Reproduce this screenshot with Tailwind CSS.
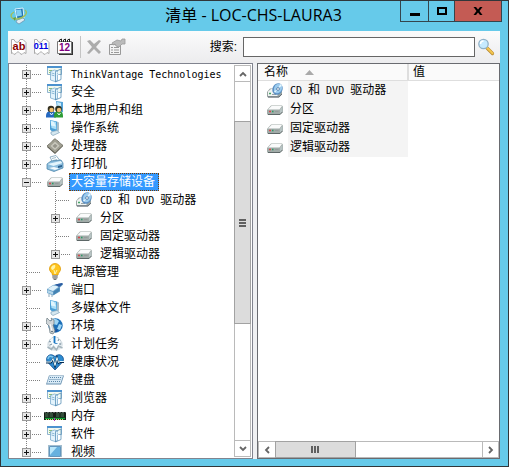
<!DOCTYPE html>
<html lang="zh-CN">
<head>
<meta charset="utf-8">
<meta name="viewport" content="width=device-width, initial-scale=1">
<title>清单 - LOC-CHS-LAURA3</title>
<script src="https://cdn.jsdelivr.net/npm/@tailwindcss/browser@4"></script>
</head>
<body class="h-screen overflow-hidden font-['DejaVu_Sans_Mono','Noto_Sans_CJK_SC',monospace] text-xs text-black">
<svg class="hidden" aria-hidden="true">
  <defs>
    <linearGradient id="gb" x1="0" y1="0" x2="1" y2="1"><stop offset="0" stop-color="#b9e6fb"/><stop offset="1" stop-color="#3b94d2"/></linearGradient>
    <linearGradient id="gd" x1="0" y1="0" x2="0" y2="1"><stop offset="0" stop-color="#fff"/><stop offset="1" stop-color="#ced4d2"/></linearGradient>
  </defs>
  <symbol id="line" viewBox="0 0 29 18"><path d="M13.500 0V18" stroke="#808080" stroke-dasharray="1 1"/></symbol>
  <symbol id="leaf" viewBox="0 0 29 18"><path d="M13.500 0V18M14 9.500H28" stroke="#808080" stroke-dasharray="1 1"/></symbol>
  <symbol id="plus" viewBox="0 0 29 18"><path d="M13.500 0V18M19 9.500H28" stroke="#808080" stroke-dasharray="1 1"/><rect x="9.500" y="5.500" width="8" height="8" fill="#e6e6e6" stroke="#999"/><path d="M11 9.500H16M13.500 7V12" stroke="#111"/></symbol>
  <symbol id="plusend" viewBox="0 0 29 18"><path d="M13.500 0V5M19 9.500H28" stroke="#808080" stroke-dasharray="1 1"/><rect x="9.500" y="5.500" width="8" height="8" fill="#e6e6e6" stroke="#999"/><path d="M11 9.500H16M13.500 7V12" stroke="#111"/></symbol>
  <symbol id="minus" viewBox="0 0 29 18"><path d="M13.500 0V18M19 9.500H28" stroke="#808080" stroke-dasharray="1 1"/><rect x="9.500" y="5.500" width="8" height="8" fill="#e6e6e6" stroke="#999"/><path d="M11 9.500H16" stroke="#111"/></symbol>

  <symbol id="server" viewBox="0 0 18 18">
    <path d="M1.500 1.500h14v8h-14z" fill="#f3f9ef" stroke="#8fb4cf"/><path d="M1 1h15v2H1z" fill="#4c92cf"/><path d="M3 5.500h3M3 7.500h2" stroke="#8bbe77"/>
    <path d="M4.500 6.500l4-1.500 3 1v9.500l-2.500 1-4.500-1.500z" fill="#e3f3fc" stroke="#6fa3c8" stroke-width=".7"/>
    <path d="M9.500 6.500L15 4v10.500l-5.500 2.500z" fill="url(#gb)" stroke="#4481ae" stroke-width=".7"/>
    <path d="M5.500 8l3 .8M5.500 10l3 .8" stroke="#74a9cb" stroke-width=".8"/><path d="M11 7.500l3-1.200M11 9.500l3-1.200" stroke="#e8f7ff" stroke-width=".8"/>
  </symbol>
  <symbol id="pc" viewBox="0 0 18 18">
    <path d="M4 1l7 1.500 1 9-6 1-2-2z" fill="#4a9fd6"/><path d="M4.500 1.500L10 3l.5 7.500-5-1.500z" fill="#a9def8"/><path d="M5 2l3 1 2 4.500-5-1z" fill="#e0f5fd"/><path d="M11 2.500l2 1v8l-2 1z" fill="#a5bdcb"/><path d="M5 13l6-1.500 2.500 2-6.500 3-2-1.500z" fill="#d6e8f0" stroke="#7fa2ba" stroke-width=".7"/>
  </symbol>
  <symbol id="users" viewBox="0 0 18 18">
    <path d="M10 0l7 1v10l-5 3z" fill="#57a5d9"/><path d="M11 1l4 1v7l-3 1z" fill="#c5eafb"/><path d="M0 15q0-5 5-5t5 5v1.500H0z" fill="#2468c0"/><path d="M8 15q0-5 4.500-5T17 15v1.500H8z" fill="#2e9c35"/><circle cx="5" cy="8" r="3.300" fill="#332f20"/><circle cx="5.500" cy="9" r="2.200" fill="#f2c16f"/><circle cx="12.500" cy="8" r="3.300" fill="#273021"/><circle cx="13" cy="9" r="2.200" fill="#efbd77"/><path d="M4 12l1.500 2L7 12M11.500 12l1.500 2 1.500-2" stroke="#e9f7ff" fill="none"/>
  </symbol>
  <symbol id="cpu" viewBox="0 0 18 18">
    <path d="M1 10L9 2l8 7-8 8z" fill="#56554b"/><path d="M1 9L9 1.500 17 8.500 9 16z" fill="#a09f92" stroke="#615f52" stroke-dasharray="1 .7"/><path d="M4.500 9L9 4.800l4.500 3.900L9 13z" fill="#c9c8bd"/><path d="M6.500 9L9 6.700l2.500 2L9 11.200z" fill="#96958a"/>
  </symbol>
  <symbol id="printer" viewBox="0 0 18 18">
    <path d="M4 2l6-1.500 4 5L7 8z" fill="#fff" stroke="#789fb7" stroke-width=".8"/><path d="M6 3.500l4-1M7 5.500l4-1" stroke="#a3bfce"/><path d="M1 9l4-3 10-1 2 3v5l-9 3.500L1 14z" fill="#8bbddd" stroke="#407ca4" stroke-width=".7"/><path d="M1.500 9l6 2L16.500 8l-2-2L6 8z" fill="#e4f5fc"/><path d="M3 13l6 2 4-1.500-5-1.500z" fill="#f5fbfd"/><path d="M12 11l4-1v2l-4 1z" fill="#2c608e"/>
  </symbol>
  <symbol id="drive" viewBox="0 0 18 18">
    <path d="M1 9l4-4.500h11l1 1v5L14 14H2l-1-1z" fill="#a1aba8"/><path d="M2 8.500L5.500 5H16l-2.500 3.500z" fill="#fafbfb"/><path d="M1.700 8.500h12v4.500h-12z" fill="url(#gd)"/><path d="M14 8.500L16.500 5.500v5L14 13z" fill="#b7c3c3"/><path d="M3 10.500h2" stroke="#d8484b" stroke-width="1.500"/><path d="M6 10.500h1.500" stroke="#2a9b64" stroke-width="1.500"/><path d="M9 10.500h3.500" stroke="#959b9c"/><path d="M2 13.500h12l2.500-2.500" stroke="#5d6767" fill="none"/>
  </symbol>
  <symbol id="cddrive" viewBox="0 0 18 18">
    <path d="M1 10l3-3.500h11l1 1v5L13 15.500H2l-1-1z" fill="#99a3a1"/><path d="M2 9.500L5 7h7l-.5 7H2z" fill="#f1f4f3"/><path d="M3 11.500h2" stroke="#47a467" stroke-width="1.500"/><path d="M6 12.500h4" stroke="#99a5a8"/><ellipse cx="11.500" cy="7" rx="5" ry="6" transform="rotate(24 11.500 7)" fill="#5c90c4"/><ellipse cx="12" cy="6.500" rx="3.900" ry="4.900" transform="rotate(24 12 6.500)" fill="#9bcbee"/><path d="M12 6l2.500-4 1.500 2zM11 8l-2 3-1-2z" fill="#e6f7ff"/><circle cx="12" cy="7" r="1.400" fill="#fff" stroke="#386694" stroke-width=".7"/><path d="M2 15h11l3-3" stroke="#69717a" fill="none"/>
  </symbol>
  <symbol id="bulb" viewBox="0 0 18 18">
    <path d="M3.500 6a5.500 5.500 0 0111 0c0 3-2.500 3.500-2.500 6H6.500C6.500 9.500 3.500 9 3.500 6z" fill="#ffc51f" stroke="#df9800" stroke-width=".8"/><path d="M5 5a4 4 0 014-3c1 2-1 5-3 5z" fill="#fff4a8"/><path d="M8 7l1 4 2-4" fill="none" stroke="#fff5ae"/><path d="M6.500 12h5v3L10 17H8l-1.500-2z" fill="#777"/><path d="M7 13h4M7 15h4" stroke="#ddd" stroke-width=".8"/>
  </symbol>
  <symbol id="port" viewBox="0 0 18 18">
    <path d="M1 8l6-4 9-2 1 1.500-3 3v4L7 14.500 1 12z" fill="#6da3ca"/><path d="M1.500 8L7 4.500l6 1L7 10z" fill="#dff1fa"/><path d="M1.500 9L7 11v2.500L1.500 11.500z" fill="#b4d6ea"/><path d="M7.500 10.500l6-4v3.500l-6 4z" fill="#4583b3"/><path d="M9 3.500l7-1.500 1 1-4 3z" fill="#2c5aa0"/><path d="M3 13v3M6 14v2" stroke="#8ba7ba"/>
  </symbol>
  <symbol id="globe" viewBox="0 0 18 18">
    <circle cx="9.500" cy="8.500" r="7.200" fill="#1d70b8"/><path d="M6 2q4-1 7 2l-2 4-4-1zM13 7l3 1-2 5-3-1z" fill="#9fd6f5"/><path d="M4 11q4 3 8 1l-1 3-5-1z" fill="#1850a0"/><path d="M1 1l3 3 2-1-1-2 3 2v4l-1 1 2 6-2 3-3-1L3 9 0 6z" fill="#d0d5d8" stroke="#687880" stroke-width=".7"/><path d="M4 7l2 7" stroke="#fff"/><circle cx="6" cy="14.500" r=".8" fill="#415866"/>
  </symbol>
  <symbol id="clock" viewBox="0 0 18 18">
    <ellipse cx="9" cy="9.500" rx="8" ry="6.500" fill="#e1e8ec"/><circle cx="9" cy="8" r="6" fill="#f4f9fc" stroke="#b4c1c8" stroke-dasharray="2 1"/><path d="M8.500 1v7" stroke="#1575c4" stroke-width="1.800"/><path d="M8.500 8.500h3" stroke="#4c90c8"/><path d="M1.500 12l4 2.500 2-3 3 3.500 2-4 4 2" stroke="#a4b4bc" stroke-width="1.500" fill="none"/><path d="M3 6l2 1M4 10l2-1M13 4l-1 2M13 9h2" stroke="#71899a"/>
  </symbol>
  <symbol id="heart" viewBox="0 0 18 18">
    <path d="M9 17L1 8.500C-1 4 4-1 9 3.500 14-1 19 4 17 8.500z" fill="#2d8bd0" stroke="#0f4c8e" stroke-width=".8"/><path d="M2 6c0-3 3-4 6-1" stroke="#81c9ef" fill="none" stroke-width="1.500"/><path d="M0 9.500h5L7 6l2 7 2-8 1.500 5 1.500-1h4" stroke="#062a50" stroke-width="1.800" fill="none"/><path d="M0 9h5l2-3.500 2 7 2-8 1.500 5L14 8.500h4" stroke="#e5faff" fill="none"/>
  </symbol>
  <symbol id="keyboard" viewBox="0 0 18 18">
    <path d="M3 4.500h15l-3 9H0z" fill="#658eae"/><path d="M3.500 5H17l-2.500 7.500H1z" fill="#d8eaf6"/><path d="M4 6.500h12M3.500 8.500h12M3 10.500h11.500" stroke="#5c86a8" stroke-dasharray="1 1"/>
  </symbol>
  <symbol id="memory" viewBox="0 0 22 18">
    <path d="M0 5h22v8H0z" fill="#151d17"/><path d="M1 6h3.500v4H1zM5.500 6H9v4H5.500zM12 6h3.500v4H12zM16.500 6H20v4h-3.500z" fill="#324c39"/><path d="M0 5.500h22" stroke="#53605a" stroke-dasharray="2 1"/><path d="M1 11.500h20" stroke="#13a339" stroke-width="1.500"/><path d="M2 12.500h18" stroke="#d7d76b" stroke-dasharray="1 1"/><path d="M10 11h1v3h-1z" fill="#ba36b4"/>
  </symbol>
  <symbol id="monitor" viewBox="0 0 18 18">
    <path d="M2 2h14v14H2z" fill="#a2bdce"/><path d="M3.500 3.500h11v10h-11z" fill="#236fae"/><path d="M4 4h10v9H4z" fill="#66b1df"/><path d="M4 4h7l-7 8z" fill="#b9e7fb"/><path d="M4 15h10" stroke="#e4f0f7"/>
  </symbol>
</svg>

<div class="flex h-full flex-col border border-[#30363a] bg-[#66caea] px-[7px] pb-[7px]">
  <header class="relative flex h-[30px] shrink-0 items-center pl-[2px]">
    <svg class="h-[18px] w-[18px]" viewBox="0 0 18 18" aria-hidden="true"><path d="M5 2l8-1 1 10-7 1z" fill="#2476b3" stroke="#d9f3ff"/><path d="M6 3l5-.5 1 6-5 1z" fill="#80cff3"/><path d="M7 13l6-2 2 2-6 4-3-2z" fill="#dcecf3" stroke="#648daa" stroke-width=".7"/><path d="M4 5C-1 8 1 13 7 12c7-1 12-6 8-9" fill="none" stroke="#a2bf58" stroke-width="1.300"/><path d="M3 11l3-1-1 4" fill="#6d9c38"/></svg>
    <h1 class="absolute inset-x-0 top-[2px] pr-[2px] text-center font-['Open_Sans','Noto_Sans_CJK_SC',sans-serif] text-base leading-6">清单 - LOC-CHS-LAURA3</h1>
    <div class="absolute top-0 right-[-1px] flex h-[21px] divide-x divide-[#34454d] border-x border-b border-[#34454d]">
      <button type="button" aria-label="最小化" class="grid w-7 place-items-center"><svg class="h-3 w-3" viewBox="0 0 12 12"><path d="M1 8h10v3H1z"/></svg></button>
      <button type="button" aria-label="最大化" class="grid w-[26px] place-items-center"><svg class="h-3 w-3" viewBox="0 0 12 12"><path d="M1 2h10v8H1zM3 4v4h6V4z" fill-rule="evenodd"/></svg></button>
      <button type="button" aria-label="关闭" class="grid w-[46px] place-items-center bg-[#c45b54]"><svg class="h-3 w-3" viewBox="0 0 12 12"><path d="M1.500 2H4l2 2.500L8 2h2.500L7.500 6l3 4H8L6 7.500 4 10H1.500l3-4z"/></svg></button>
    </div>
  </header>

  <main class="mr-px flex min-h-0 flex-1 flex-col bg-[#eff0f2]">
    <div class="flex h-8 shrink-0 items-center bg-linear-to-b from-[#fbfbfb] to-[#ececee] pr-[5px] pl-[2px]" role="toolbar">
      <button type="button" aria-label="文本" class="mr-[5px]"><svg class="h-[18px] w-[18px]" viewBox="0 0 18 18"><path d="M1.500 15.500V1.500H4l1 2 2 1 2-1 1-2h3l3 3v11l-2-1-2 2-2-1-2-2-2 2-2 1-2-2z" fill="#fff" stroke="#aaa"/><text x="9" y="12" text-anchor="middle" font-size="11" font-weight="bold" font-family="Liberation Sans" fill="#8b0000">ab</text></svg></button>
      <button type="button" aria-label="数字" class="mr-[5px]"><svg class="h-[18px] w-[18px]" viewBox="0 0 18 18"><path d="M1.500 15.500V1.500H4l1 2 2 1 2-1 1-2h3l3 3v11l-2-1-2 2-2-1-2-2-2 2-2 1-2-2z" fill="#fff" stroke="#aaa"/><text x="8" y="11" text-anchor="middle" font-size="9" font-weight="bold" font-family="Liberation Sans" fill="#0000e0">011</text></svg></button>
      <button type="button" aria-label="日期" class="mr-[6px]"><svg class="h-[18px] w-[18px]" viewBox="0 0 18 18"><path d="M3 4h14v13H3z" fill="#333"/><path d="M1.500 3.500h14v12h-14z" fill="#fff" stroke="#777"/><path d="M3.500 4V2l2-1v3M7.500 4V2l2-1v3M11.500 4V2l2-1v3" fill="none" stroke="#222"/><text x="8.500" y="13" text-anchor="middle" font-size="10" font-weight="bold" font-family="Liberation Sans" fill="#800080">12</text></svg></button>
      <span class="mr-[5px] h-[22px] w-px bg-[#c4c4c4]"></span>
      <button type="button" aria-label="删除" class="mr-1" disabled><svg class="h-[18px] w-[18px]" viewBox="0 0 18 18"><path d="M1 3l3-1 4 4 5-4 2 1-5 6 5 5-2 2-5-5-5 5-2-1 5-6z" fill="#acacac"/></svg></button>
      <button type="button" aria-label="属性" disabled><svg class="h-[18px] w-[18px]" viewBox="0 0 18 18"><path d="M1.500 6.500h11v10h-11z" fill="#f3f3f3" stroke="#999"/><path d="M3 9.500h2M6 9.500h5M3 12h2M6 12h5M3 14.500h2M6 14.500h5" stroke="#999"/><path d="M4 5l5-3 4 1 1-2h3v5h-3l-3 3-3-1-1-2-2 1z" fill="#bbb" stroke="#999" stroke-width=".8"/></svg></button>
      <label for="q" class="mr-[6px] ml-auto shrink-0 pl-2 font-['Liberation_Sans','Noto_Sans_CJK_SC',sans-serif]">搜索:</label>
      <input id="q" type="text" class="h-5 w-[232px] border border-[#666] bg-white px-1 outline-none">
      <button type="button" aria-label="查找" class="ml-[2px]"><svg class="h-[18px] w-[18px]" viewBox="0 0 18 18"><path d="M10 10l5.500 5.500" stroke="#b98a30" stroke-width="3.200" stroke-linecap="round"/><path d="M10 9.700l5.500 5.500" stroke="#f3c64f" stroke-width="2" stroke-linecap="round"/><circle cx="6.500" cy="6" r="4.700" fill="#c6eaff" stroke="#8fb0c6" stroke-width="1.300"/><path d="M3.500 6a3 3 0 013-3" fill="none" stroke="#fff" stroke-width="1.500"/></svg></button>
    </div>

    <div class="flex min-h-0 flex-1 gap-1">
      <section class="flex w-[245px] shrink-0 border border-[#81848f] bg-white p-px pl-0">
        <ul id="tree" role="tree" class="min-w-0 flex-1 overflow-hidden pl-1 leading-[18px] whitespace-nowrap"></ul>
        <div class="flex w-[17px] shrink-0 flex-col border border-[#bababa] bg-white">
          <button type="button" aria-label="向上" class="grid h-4 place-items-center border-b border-[#bababa]"><svg class="h-2 w-2" viewBox="0 0 8 8"><path d="M1 6l3-3 3 3" fill="none" stroke="#666" stroke-width="1.800"/></svg></button>
          <span class="grow-[39]"></span>
          <span class="-mx-px flex grow-[193] flex-col items-center justify-center gap-px border border-[#a2a2a2] bg-[#dcdcdc]"><i class="h-0.5 w-[7px] bg-[#606060]"></i><i class="h-0.5 w-[7px] bg-[#606060]"></i><i class="h-0.5 w-[7px] bg-[#606060]"></i></span>
          <span class="grow-[116]"></span>
          <button type="button" aria-label="向下" class="grid h-4 place-items-center border-t border-[#bababa]"><svg class="h-2 w-2" viewBox="0 0 8 8"><path d="M1 2l3 3 3-3" fill="none" stroke="#666" stroke-width="1.800"/></svg></button>
        </div>
      </section>

      <section class="flex min-w-0 flex-1 flex-col border border-[#696b70] bg-white">
        <div class="min-h-0 flex-1 overflow-hidden">
          <table class="w-full table-fixed border-collapse text-left">
            <thead class="bg-[#fafafa]">
              <tr class="h-4 leading-4">
                <th class="w-[150px] border-r-2 border-b border-[#dedede] p-0 pl-[6px] font-normal"><span class="flex items-center gap-[17px]">名称<svg class="h-[5px] w-[9px]" viewBox="0 0 9 5"><path d="M0 5l4.500-5L9 5z" fill="#aaa"/></svg></span></th>
                <th class="border-b border-[#dedede] p-0 pl-1 font-normal">值</th>
              </tr>
            </thead>
            <tbody id="list"></tbody>
          </table>
        </div>
        <div class="flex h-[17px] shrink-0 border border-[#bababa]">
          <button type="button" aria-label="向左" class="grid w-4 place-items-center"><svg class="h-2 w-2" viewBox="0 0 8 8"><path d="M6 1L3 4l3 3" fill="none" stroke="#666" stroke-width="1.800"/></svg></button>
          <span class="-my-px flex grow-[70] items-center justify-center gap-px border border-[#a2a2a2] bg-[#dcdcdc]"><i class="h-[7px] w-0.5 bg-[#606060]"></i><i class="h-[7px] w-0.5 bg-[#606060]"></i><i class="h-[7px] w-0.5 bg-[#606060]"></i></span>
          <span class="grow-[125]"></span>
          <button type="button" aria-label="向右" class="grid w-4 place-items-center border-l border-[#bababa]"><svg class="h-2 w-2" viewBox="0 0 8 8"><path d="M2 1l3 3-3 3" fill="none" stroke="#666" stroke-width="1.800"/></svg></button>
        </div>
      </section>
    </div>
  </main>
</div>

<script>
  // [depth, branch, icon, label]
  const nodes = [
    [0, 'plus', 'server', 'ThinkVantage Technologies'],
    [0, 'plus', 'server', '安全'],
    [0, 'plus', 'users', '本地用户和组'],
    [0, 'plus', 'pc', '操作系统'],
    [0, 'plus', 'cpu', '处理器'],
    [0, 'plus', 'printer', '打印机'],
    [0, 'minus', 'drive', '大容量存储设备'],
    [1, 'leaf', 'cddrive', 'CD 和 DVD 驱动器'],
    [1, 'plus', 'drive', '分区'],
    [1, 'leaf', 'drive', '固定驱动器'],
    [1, 'plusend', 'drive', '逻辑驱动器'],
    [0, 'leaf', 'bulb', '电源管理'],
    [0, 'plus', 'port', '端口'],
    [0, 'leaf', 'pc', '多媒体文件'],
    [0, 'plus', 'globe', '环境'],
    [0, 'plus', 'clock', '计划任务'],
    [0, 'leaf', 'heart', '健康状况'],
    [0, 'leaf', 'keyboard', '键盘'],
    [0, 'plus', 'server', '浏览器'],
    [0, 'plus', 'memory', '内存'],
    [0, 'plus', 'server', '软件'],
    [0, 'plus', 'monitor', '视频'],
  ];
  // Latin runs are set smaller so that each letter takes half of a Chinese character
  const label = t => t.replace(/[A-Za-z ]+/g, m => `<span class="text-[10px] whitespace-pre">${m}</span>`);
  const branch = id => `<svg class="block h-[18px] w-[29px]"><use href="#${id}"/></svg>`;
  const icon = id => id === 'memory'
    ? `<svg class="mx-[2px] h-[18px] w-[22px] shrink-0"><use href="#memory"/></svg>`
    : `<svg class="mx-1 h-[18px] w-[18px] shrink-0"><use href="#${id}"/></svg>`;

  document.getElementById('tree').innerHTML = nodes.map(([depth, kind, pic, text]) => {
    const toggle = kind === 'leaf' ? branch(kind)
      : `<button type="button" aria-label="${kind === 'minus' ? '折叠' : '展开'} ${text}">${branch(kind)}</button>`;
    const selected = kind === 'minus';
    const cls = selected
      ? 'ml-px h-[18px] border border-dotted border-[#7a3d00] bg-[#3399ff] pr-[3px] pl-px leading-4 text-white'
      : 'ml-px px-[2px]';
    return `<li role="treeitem" aria-selected="${selected}" class="flex h-[18px] items-center">${depth ? branch('line') : ''}${toggle}${icon(pic)}<span class="${cls}">${label(text)}</span></li>`;
  }).join('');

  document.getElementById('list').innerHTML = nodes.filter(n => n[0]).map(([, , pic, text]) =>
    `<tr class="h-[19px]"><td class="p-0 pl-1"><span class="flex items-center">${icon(pic)}<span class="h-[19px] flex-1 bg-[#f4f4f4] pl-[2px] leading-[19px]">${label(text)}</span></span></td><td></td></tr>`).join('');
</script>
</body>
</html>
